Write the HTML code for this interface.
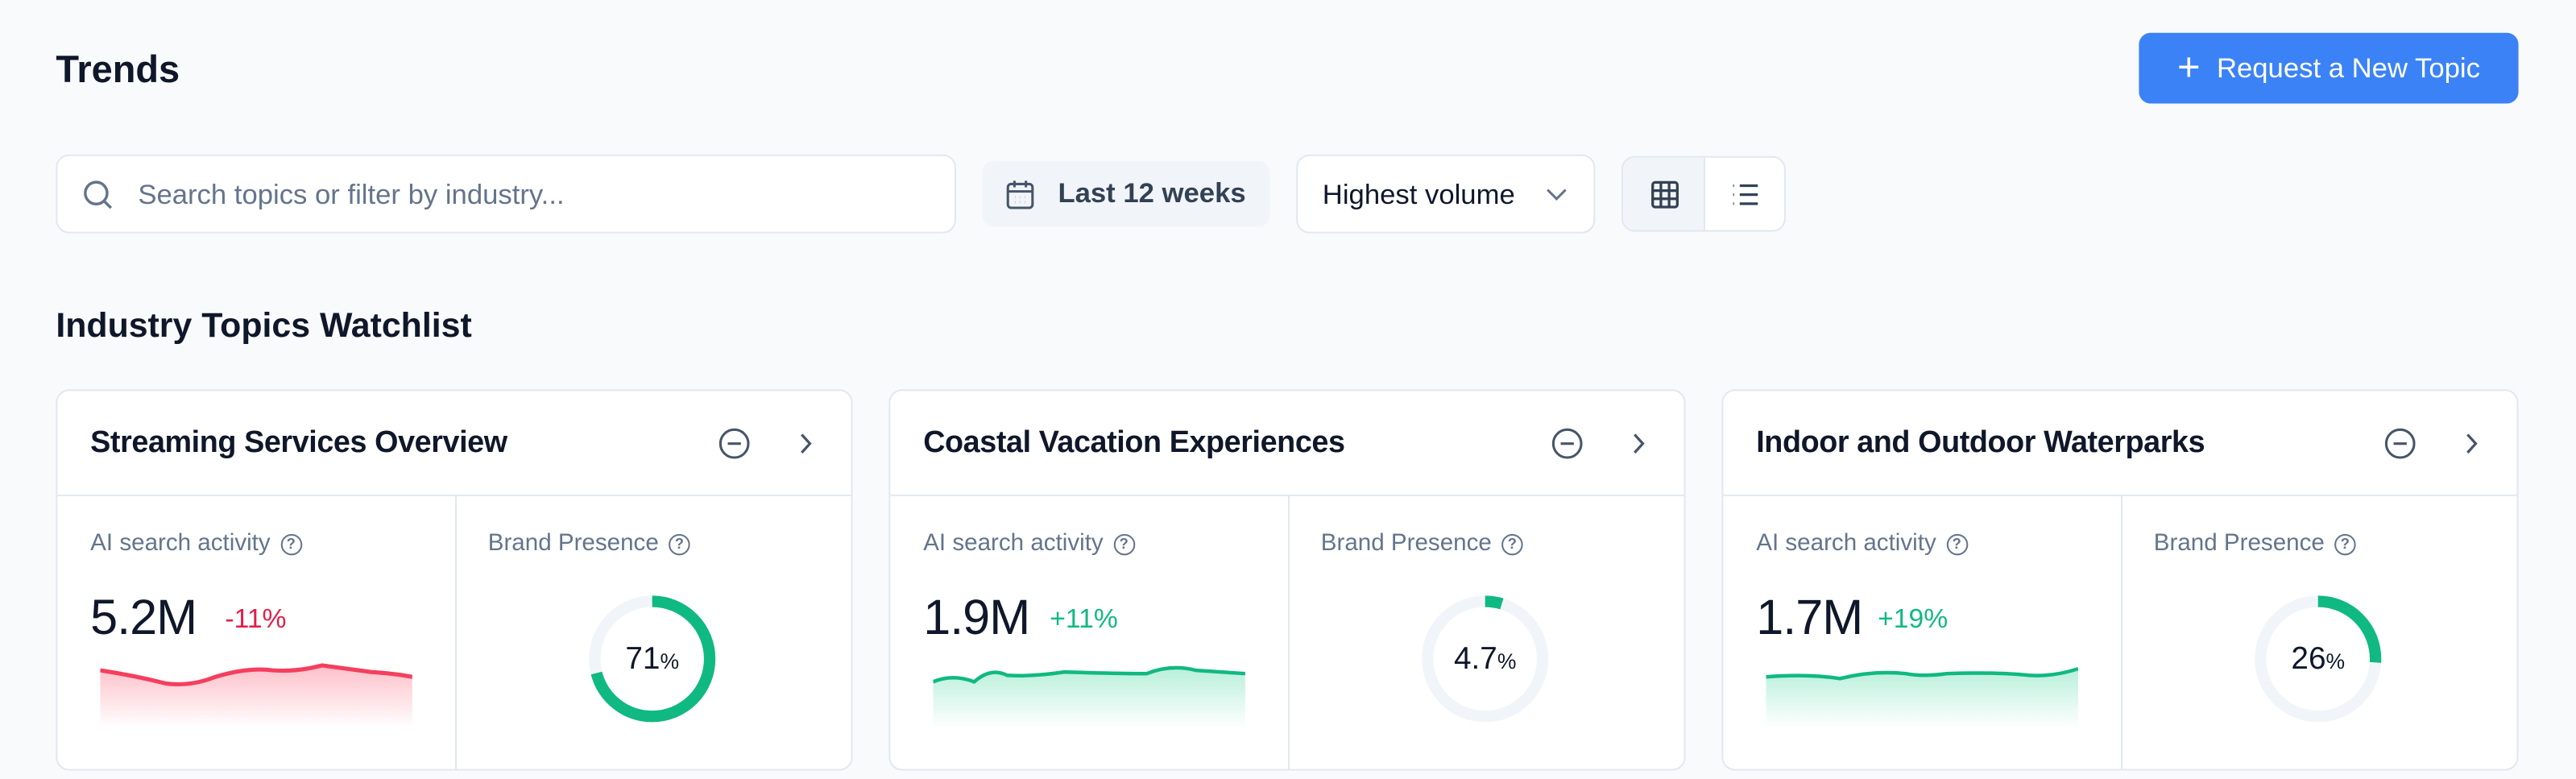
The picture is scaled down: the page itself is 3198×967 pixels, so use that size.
<!DOCTYPE html>
<html><head><meta charset="utf-8"><style>
*{box-sizing:border-box;margin:0;padding:0}
html,body{width:3198px;height:966px;overflow:hidden;background:#f8fafc}
#w{position:absolute;left:0;top:0;width:1568px;height:474px;transform:scale(2.0395);transform-origin:0 0;font-family:"Liberation Sans",Arial,sans-serif;color:#0f172a}
.a{position:absolute}
.btn{left:1302px;top:20px;width:231px;height:43px;background:#3b82f6;border-radius:7px;color:#fff;font-size:17px;display:flex;align-items:center;justify-content:center;gap:10px}
.box{background:#fff;border:1px solid #e2e8f0;border-radius:8px}
.card{top:237px;width:485px;height:232px;background:#fff;border:1px solid #e2e8f0;border-radius:8px;overflow:hidden}
.hd{position:absolute;left:0;top:0;width:100%;height:64px;border-bottom:1px solid #e2e8f0}
.hd .t{position:absolute;left:20px;top:20px;font-size:18.5px;font-weight:600;letter-spacing:-.2px}
.vl{position:absolute;left:242px;top:64px;width:1px;height:180px;background:#e2e8f0}
.lbl{position:absolute;top:85px;font-size:14.5px;color:#64748b;display:flex;align-items:center;gap:6px}
.q{width:13px;height:13px;border:1.3px solid #64748b;border-radius:50%;font-size:9px;line-height:11px;text-align:center;font-weight:bold}
.val{position:absolute;left:20px;top:122px;font-size:30px;font-weight:500;letter-spacing:-.5px}
.chg{position:absolute;top:130px;font-size:16.5px;font-weight:500}
</style></head><body><div id="w">
<div class="a" style="left:34px;top:29px;font-size:23px;font-weight:600">Trends</div>
<div class="a btn"><span style="font-size:24px;font-weight:300;line-height:1">+</span>Request a New Topic</div>

<div class="a box" style="left:34px;top:94px;width:548px;height:48px">
<svg class="a" style="left:15px;top:14px" width="19" height="19" viewBox="0 0 20 20" fill="none" stroke="#64748b" stroke-width="1.8"><circle cx="9" cy="9" r="7"/><path d="M14 14l4.5 4.5"/></svg>
<div class="a" style="left:49px;top:14px;font-size:17px;color:#64748b">Search topics or filter by industry...</div></div>

<div class="a" style="left:598px;top:98px;width:175px;height:40px;background:#f1f5f9;border-radius:7px">
<svg class="a" style="left:14px;top:11px" width="18" height="19" viewBox="0 0 18 19" fill="none" stroke="#475569" stroke-width="1.5"><rect x="1.5" y="3" width="15" height="14.5" rx="2"/><path d="M1.5 7.5h15M5.5 1v4M12.5 1v4"/><path d="M6 11h.1M9 11h.1M12 11h.1M6 14h.1M9 14h.1M12 14h.1" stroke-width="1.6"/></svg>
<div class="a" style="left:46px;top:10px;font-size:17px;font-weight:600;color:#334155">Last 12 weeks</div></div>

<div class="a box" style="left:789px;top:94px;width:182px;height:48px">
<div class="a" style="left:15px;top:14px;font-size:17px">Highest volume</div>
<svg class="a" style="left:151px;top:19px" width="13" height="9" viewBox="0 0 13 9" fill="none" stroke="#64748b" stroke-width="1.5"><path d="M1 1.5l5.5 5.5 5.5-5.5"/></svg></div>

<div class="a box" style="left:987px;top:95px;width:100px;height:46px;overflow:hidden">
<div class="a" style="left:0;top:0;width:50px;height:46px;background:#f1f5f9;border-right:1px solid #e2e8f0"></div>
<svg class="a" style="left:17px;top:14px" width="17" height="17" viewBox="0 0 17 17" fill="none" stroke="#334155" stroke-width="1.6"><rect x="1" y="1" width="15" height="15" rx="1.5"/><path d="M6 1v15M11 1v15M1 6h15M1 11h15"/></svg>
<svg class="a" style="left:66px;top:15px" width="17" height="15" viewBox="0 0 17 15" fill="none" stroke="#334155" stroke-width="1.6"><path d="M5 2h11M5 7.5h11M5 13h11M1 2h.5M1 7.5h.5M1 13h.5"/></svg></div>

<div class="a" style="left:34px;top:187px;font-size:21px;font-weight:600">Industry Topics Watchlist</div>

<div class="a card" style="left:34px">
<div class="hd"><div class="t">Streaming Services Overview</div>
<svg class="a" style="left:402px;top:22px" width="20" height="20" viewBox="0 0 20 20" fill="none" stroke="#475569" stroke-width="1.5"><circle cx="10" cy="10" r="8.5"/><path d="M6 10h8"/></svg>
<svg class="a" style="left:451px;top:25px" width="9" height="14" viewBox="0 0 9 14" fill="none" stroke="#475569" stroke-width="1.6"><path d="M2 1.5l5 5.5-5 5.5"/></svg></div>
<div class="vl"></div>
<div class="lbl" style="left:20px">AI search activity <span class="q">?</span></div>
<div class="lbl" style="left:262px">Brand Presence <span class="q">?</span></div>
<div class="val">5.2M</div><div class="chg" style="left:102px;color:#e11d48">-11%</div>
<svg class="a" style="left:26px;top:160px" width="190" height="45" viewBox="0 0 190 45"><defs><linearGradient id="gr" x1="0" y1="0" x2="0" y2="1"><stop offset="0" stop-color="#fb7185" stop-opacity=".45"/><stop offset="1" stop-color="#fb7185" stop-opacity="0"/></linearGradient></defs><path d="M0 10 Q20 13 40 18 Q55 20 70 14 Q90 8 105 10 Q120 11 135 7 Q150 9 165 11 Q180 12 190 14 L190 45 L0 45Z" fill="url(#gr)"/><path d="M0 10 Q20 13 40 18 Q55 20 70 14 Q90 8 105 10 Q120 11 135 7 Q150 9 165 11 Q180 12 190 14" fill="none" stroke="#f43f5e" stroke-width="2.5"/></svg>
<svg class="a" style="left:322px;top:123px" width="80" height="80" viewBox="0 0 80 80"><circle cx="40" cy="40" r="35" fill="none" stroke="#f1f5f9" stroke-width="7"/><circle cx="40" cy="40" r="35" fill="none" stroke="#10b981" stroke-width="7" stroke-dasharray="156.1 220" transform="rotate(-90 40 40)"/><text x="40" y="46" text-anchor="middle" font-family="Liberation Sans" font-size="19" font-weight="500" fill="#0f172a">71<tspan font-size="13">%</tspan></text></svg>
</div>

<div class="a card" style="left:541px">
<div class="hd"><div class="t">Coastal Vacation Experiences</div>
<svg class="a" style="left:402px;top:22px" width="20" height="20" viewBox="0 0 20 20" fill="none" stroke="#475569" stroke-width="1.5"><circle cx="10" cy="10" r="8.5"/><path d="M6 10h8"/></svg>
<svg class="a" style="left:451px;top:25px" width="9" height="14" viewBox="0 0 9 14" fill="none" stroke="#475569" stroke-width="1.6"><path d="M2 1.5l5 5.5-5 5.5"/></svg></div>
<div class="vl"></div>
<div class="lbl" style="left:20px">AI search activity <span class="q">?</span></div>
<div class="lbl" style="left:262px">Brand Presence <span class="q">?</span></div>
<div class="val">1.9M</div><div class="chg" style="left:97px;color:#10b981">+11%</div>
<svg class="a" style="left:26px;top:160px" width="190" height="45" viewBox="0 0 190 45"><defs><linearGradient id="gg" x1="0" y1="0" x2="0" y2="1"><stop offset="0" stop-color="#34d399" stop-opacity=".35"/><stop offset="1" stop-color="#34d399" stop-opacity="0"/></linearGradient></defs><path d="M0 17 Q12 12 25 17 Q35 8 45 13 Q60 14 80 11 Q110 12 130 12 Q145 6 160 10 Q175 11 190 12 L190 45 L0 45Z" fill="url(#gg)"/><path d="M0 17 Q12 12 25 17 Q35 8 45 13 Q60 14 80 11 Q110 12 130 12 Q145 6 160 10 Q175 11 190 12" fill="none" stroke="#10b981" stroke-width="2.2"/></svg>
<svg class="a" style="left:322px;top:123px" width="80" height="80" viewBox="0 0 80 80"><circle cx="40" cy="40" r="35" fill="none" stroke="#f1f5f9" stroke-width="7"/><circle cx="40" cy="40" r="35" fill="none" stroke="#10b981" stroke-width="7" stroke-dasharray="10.3 220" transform="rotate(-90 40 40)"/><text x="40" y="46" text-anchor="middle" font-family="Liberation Sans" font-size="19" font-weight="500" fill="#0f172a">4.7<tspan font-size="13">%</tspan></text></svg>
</div>

<div class="a card" style="left:1048px">
<div class="hd"><div class="t">Indoor and Outdoor Waterparks</div>
<svg class="a" style="left:402px;top:22px" width="20" height="20" viewBox="0 0 20 20" fill="none" stroke="#475569" stroke-width="1.5"><circle cx="10" cy="10" r="8.5"/><path d="M6 10h8"/></svg>
<svg class="a" style="left:451px;top:25px" width="9" height="14" viewBox="0 0 9 14" fill="none" stroke="#475569" stroke-width="1.6"><path d="M2 1.5l5 5.5-5 5.5"/></svg></div>
<div class="vl"></div>
<div class="lbl" style="left:20px">AI search activity <span class="q">?</span></div>
<div class="lbl" style="left:262px">Brand Presence <span class="q">?</span></div>
<div class="val">1.7M</div><div class="chg" style="left:94px;color:#10b981">+19%</div>
<svg class="a" style="left:26px;top:160px" width="190" height="45" viewBox="0 0 190 45"><path d="M0 14 Q25 12 45 15 Q65 10 85 12 Q95 14 110 12 Q140 11 160 13 Q175 14 190 9 L190 45 L0 45Z" fill="url(#gg)"/><path d="M0 14 Q25 12 45 15 Q65 10 85 12 Q95 14 110 12 Q140 11 160 13 Q175 14 190 9" fill="none" stroke="#10b981" stroke-width="2.2"/></svg>
<svg class="a" style="left:322px;top:123px" width="80" height="80" viewBox="0 0 80 80"><circle cx="40" cy="40" r="35" fill="none" stroke="#f1f5f9" stroke-width="7"/><circle cx="40" cy="40" r="35" fill="none" stroke="#10b981" stroke-width="7" stroke-dasharray="57.2 220" transform="rotate(-90 40 40)"/><text x="40" y="46" text-anchor="middle" font-family="Liberation Sans" font-size="19" font-weight="500" fill="#0f172a">26<tspan font-size="13">%</tspan></text></svg>
</div>
</div></body></html>
